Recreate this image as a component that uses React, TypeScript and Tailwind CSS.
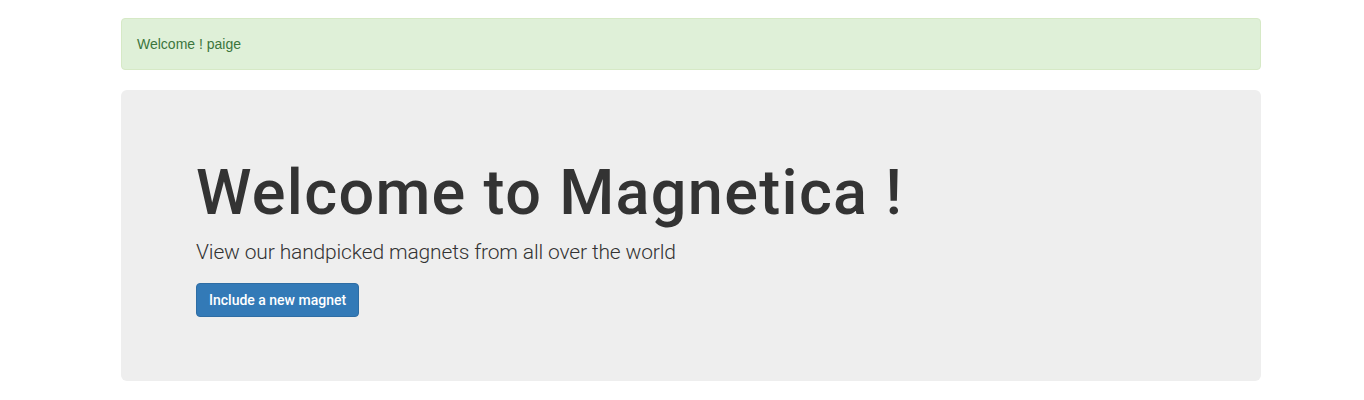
import React from 'react';

export default function App() {
  return (
    <div className="min-h-[400px] bg-white pt-[18px] pl-[121px] text-[14px] leading-[20px] text-[#333]" style={{ fontFamily: '"Liberation Sans", Arial, sans-serif' }}>
      <div className="w-[1140px]">
        {/* Alert */}
        <div className="mb-[20px] rounded-[4px] border border-[#d6e9c6] bg-[#dff0d8] p-[15px] text-[#3c763d]">
          Welcome ! paige
        </div>

        {/* Jumbotron */}
        <div className="rounded-[6px] bg-[#eeeeee] px-[75px] py-[48px]">
          <h1 className="mt-[20px] mb-[10px] font-['Roboto',sans-serif] text-[63px] leading-[69px] font-medium tracking-[1.3px] text-[#333]">
            Welcome to Magnetica !
          </h1>
          <p className="mb-[15px] font-['Roboto',sans-serif] text-[21px] leading-[30px] font-light tracking-[-0.15px] text-[#333]">
            View our handpicked magnets from all over the world
          </p>
          <p className="mb-[15px] h-[36px] pt-[1px]">
            <button className="h-[34px] rounded-[4px] border border-[#2e6da4] bg-[#337ab7] px-[12px] font-['Roboto',sans-serif] text-[14px] leading-[20px] font-medium text-white">
              Include a new magnet
            </button>
          </p>
        </div>
      </div>
    </div>
  );
}
